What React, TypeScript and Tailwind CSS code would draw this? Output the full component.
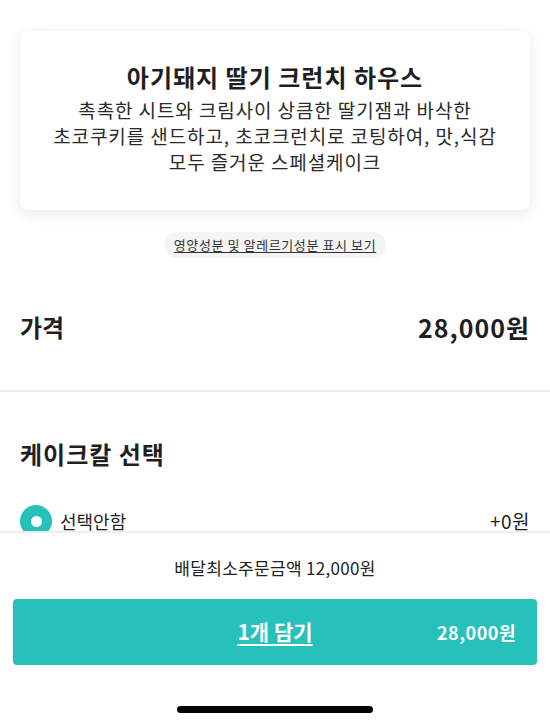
export default function App() {
  const font = { fontFamily: '"Noto Sans CJK KR", "Noto Sans", sans-serif' };

  return (
    <div style={font} className="h-screen flex flex-col bg-white text-[#1f1f1f] overflow-hidden">
      {/* scrollable content */}
      <div className="flex-1 overflow-hidden">
        <div className="px-5 pt-[31px]">
          <div className="rounded-lg bg-white shadow-[0_4px_16px_rgba(0,0,0,0.09)] pt-[31px] pb-[35px] text-center">
            <h1 className="text-[24px] leading-[30px] font-bold tracking-[1px]">아기돼지 딸기 크런치 하우스</h1>
            <p className="mt-[5px] text-[19px] leading-[26px] tracking-[0.9px] text-[#2a2a2a]">
              촉촉한 시트와 크림사이 상큼한 딸기잼과 바삭한
              <br />
              초코쿠키를 샌드하고, 초코크런치로 코팅하여, 맛,식감
              <br />
              모두 즐거운 스페셜케이크
            </p>
          </div>

          <div className="flex justify-center mt-[22px]">
            <button className="h-[26px] px-[10px] rounded-full bg-[#f4f4f4] text-[13px] tracking-[0.6px] text-[#333] underline underline-offset-2">
              영양성분 및 알레르기성분 표시 보기
            </button>
          </div>

          <div className="mt-[53px] flex items-center justify-between">
            <span className="text-[24px] leading-[32px] font-bold">가격</span>
            <span className="text-[25px] leading-[32px] font-bold tracking-[1px]">28,000원</span>
          </div>
        </div>

        <div className="mt-[47px] h-[2px] bg-[#eeeeee]" />

        <div className="px-5 pt-[46px]">
          <h2 className="text-[24px] leading-[32px] font-bold tracking-[1px]">케이크칼 선택</h2>
          <div className="mt-[35px] flex items-center justify-between">
            <div className="flex items-center gap-[8px]">
              <span className="w-8 h-8 rounded-full bg-[#27c1bb] flex items-center justify-center">
                <span className="w-[11px] h-[11px] rounded-full bg-white" />
              </span>
              <span className="text-[18px] leading-[26px]">선택안함</span>
            </div>
            <span className="text-[19px] leading-[26px] tracking-[0.5px]">+0원</span>
          </div>
        </div>
      </div>

      {/* bottom bar */}
      <div className="h-[193px] shrink-0 border-t-2 border-[#eeeeee] bg-white flex flex-col items-center">
        <p className="mt-[23px] text-[17px] leading-[24px] tracking-[0.3px] text-[#222]">배달최소주문금액 12,000원</p>
        <button className="mt-[19px] w-[524px] h-[66px] rounded-[4px] bg-[#27c1bb] text-white relative flex items-center justify-center">
          <span className="text-[21px] font-bold underline underline-offset-4 decoration-2">1개 담기</span>
          <span className="absolute right-[21px] text-[18px] font-semibold tracking-[0.5px]">28,000원</span>
        </button>
        <div className="mt-[41px] w-[196px] h-[7px] rounded-full bg-black" />
      </div>
    </div>
  );
}
